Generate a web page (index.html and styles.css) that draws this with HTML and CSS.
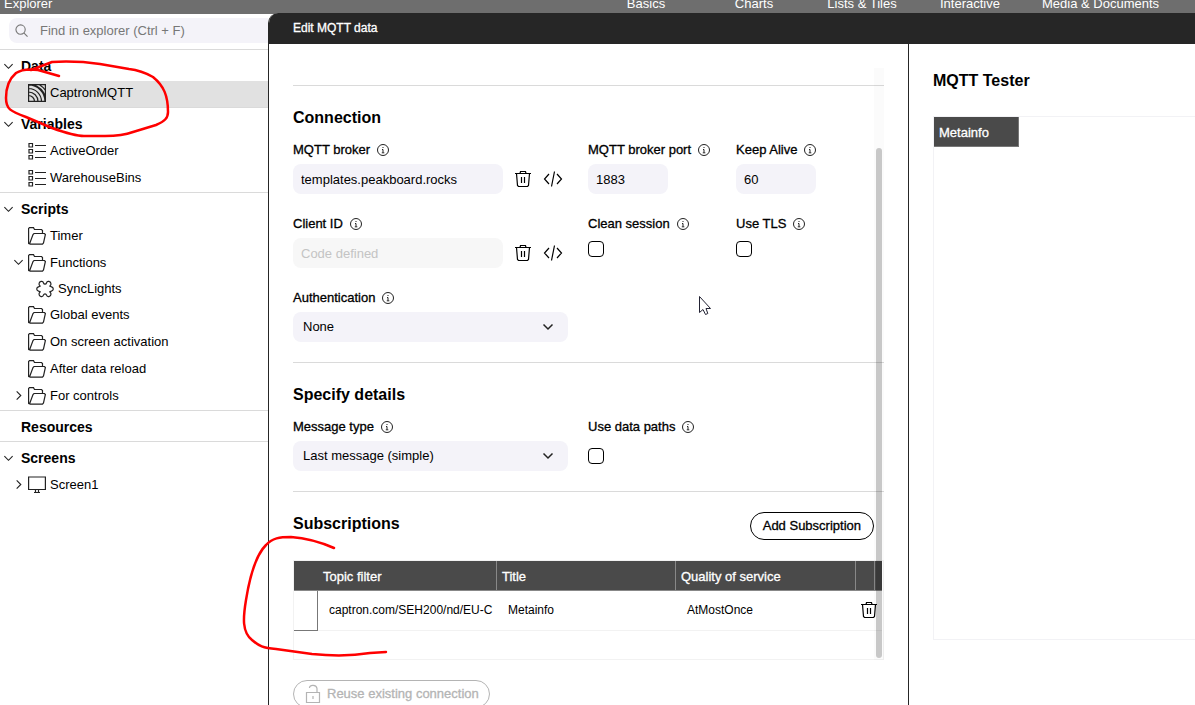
FILE: index.html
```html
<!DOCTYPE html>
<html lang="en">
<head>
<meta charset="utf-8">
<title>Edit MQTT data</title>
<link rel="stylesheet" href="styles.css">
</head>
<body>
<svg class="defs" aria-hidden="true">
  <symbol id="down" viewBox="0 0 12 12"><path d="M1.500 3.500 6 8l4.500-4.500"/></symbol>
  <symbol id="right" viewBox="0 0 12 12"><path d="M4 1.500 8.500 6 4 10.500"/></symbol>
  <symbol id="folder" viewBox="0 0 18 18"><path d="M1.500 17 .600 16.500V1.500L1.500 .600H5.500L6.500 2.500H13.500L14.500 3.500V6M1.500 17 5 7.500 6 6.500H16.500L17.400 7.500 15.500 16 14.500 17.200H1.500"/></symbol>
  <symbol id="list" viewBox="0 0 18 18"><path d="M1 1.500H4.500V5H1ZM1 7.500H4.500V11H1ZM1 13.500H4.500V17H1ZM7 3.500H18M7 9.500H18M7 15.500H18"/></symbol>
  <symbol id="feed" viewBox="0 0 18 18"><path d="M.600.600H17.400V17.400H.600ZM.500 11.500A6 6 0 0 1 6.500 17.500M.500 8A9.500 9.500 0 0 1 10 17.500M.500 4.500A13 13 0 0 1 13.500 17.500M.500 1A16.500 16.500 0 0 1 17 17.500M5 .500A20 20 0 0 1 17.500 12.500M11 .500A20 20 0 0 1 17.500 6.500"/></symbol>
  <symbol id="puzzle" viewBox="0 0 18 18"><path d="M7.500 3C8 4.500 10 4.500 10.500 3 11 .500 15 1 15 4 15 5 14.500 5.500 13.800 6.200 14.500 7 17.300 6.300 17.300 9 17.300 11.700 14.500 11 13.800 11.800 14.500 12.500 15 13 15 14 15 17 11 17.500 10.500 15 10 13.500 8 13.500 7.500 15 7 17.500 3 17 3 14 3 13 3.500 12.500 4.200 11.800 3.500 11 .700 11.700 .700 9 .700 6.300 3.500 7 4.200 6.200 3.500 5.500 3 5 3 4 3 1 7 .500 7.500 3Z"/></symbol>
  <symbol id="monitor" viewBox="0 0 18 18"><path d="M.600 1H17.400V13.500H.600ZM7.500 13.500V16M10.500 13.500V16M6 16.500H12"/></symbol>
  <symbol id="info" viewBox="0 0 12 12"><circle cx="6" cy="6" r="5.500"/><path d="M6 3V4M5 5.500H6V8.500M4.800 8.800H7.300"/></symbol>
  <symbol id="trash" viewBox="0 0 18 18"><path d="M1 3.500H17M6 3.500 6.500 1.500H11.500L12 3.500M2.500 3.500 3.500 15.500 4.500 16.500H13.500L14.500 15.500 15.500 3.500M7.500 7V13M10.500 7V13"/></symbol>
  <symbol id="code" viewBox="0 0 20 18"><path d="M6 4 1.500 9 6 14M14 4 18.500 9 14 14M11.500 1.500 8.500 16.500"/></symbol>
</svg>
<div class="app">
  <header class="topbar">
    <span class="topbar-title">Explorer</span>
    <nav class="tabs"><span>Basics</span><span>Charts</span><span>Lists &amp; Tiles</span><span>Interactive</span><span>Media &amp; Documents</span><span>Controls</span></nav>
  </header>
  <div class="work">
    <aside class="explorer">
      <div class="search">
        <svg class="search-icon" viewBox="0 0 14 14"><circle cx="6" cy="6" r="5"/><path d="m9.500 9.500 4 4"/></svg>
        <input type="search" aria-label="Find in explorer" placeholder="Find in explorer (Ctrl + F)">
      </div>
      <section class="group">
        <h3><svg class="chev"><use href="#down"/></svg>Data</h3>
        <div class="item selected"><span class="twist"></span><svg class="ico"><use href="#feed"/></svg>CaptronMQTT</div>
      </section>
      <section class="group">
        <h3><svg class="chev"><use href="#down"/></svg>Variables</h3>
        <div class="item"><span class="twist"></span><svg class="ico"><use href="#list"/></svg>ActiveOrder</div>
        <div class="item"><span class="twist"></span><svg class="ico"><use href="#list"/></svg>WarehouseBins</div>
      </section>
      <section class="group">
        <h3><svg class="chev"><use href="#down"/></svg>Scripts</h3>
        <div class="item"><span class="twist"></span><svg class="ico"><use href="#folder"/></svg>Timer</div>
        <div class="item"><svg class="twist"><use href="#down"/></svg><svg class="ico"><use href="#folder"/></svg>Functions</div>
        <div class="item nested"><span class="twist"></span><svg class="ico"><use href="#puzzle"/></svg>SyncLights</div>
        <div class="item"><span class="twist"></span><svg class="ico"><use href="#folder"/></svg>Global events</div>
        <div class="item"><span class="twist"></span><svg class="ico"><use href="#folder"/></svg>On screen activation</div>
        <div class="item"><span class="twist"></span><svg class="ico"><use href="#folder"/></svg>After data reload</div>
        <div class="item"><svg class="twist"><use href="#right"/></svg><svg class="ico"><use href="#folder"/></svg>For controls</div>
      </section>
      <section class="group">
        <h3><span class="chev"></span>Resources</h3>
      </section>
      <section class="group">
        <h3><svg class="chev"><use href="#down"/></svg>Screens</h3>
        <div class="item"><svg class="twist"><use href="#right"/></svg><svg class="ico"><use href="#monitor"/></svg>Screen1</div>
      </section>
    </aside>

    <main class="dialog">
      <h1>Edit MQTT data</h1>
      <div class="panes">
        <form class="settings">
          <section class="block">
            <h2>Connection</h2>
            <div class="fields">
              <div class="field">
                <label for="broker">MQTT broker <svg class="info"><use href="#info"/></svg></label>
                <div class="line">
                  <input id="broker" class="box wide" type="text" value="templates.peakboard.rocks">
                  <button type="button" class="tool" aria-label="Clear"><svg><use href="#trash"/></svg></button>
                  <button type="button" class="tool" aria-label="Code"><svg><use href="#code"/></svg></button>
                </div>
              </div>
              <div class="field">
                <label for="port">MQTT broker port <svg class="info"><use href="#info"/></svg></label>
                <input id="port" class="box short" type="text" value="1883">
              </div>
              <div class="field">
                <label for="alive">Keep Alive <svg class="info"><use href="#info"/></svg></label>
                <input id="alive" class="box short" type="text" value="60">
              </div>
              <div class="field">
                <label for="client">Client ID <svg class="info"><use href="#info"/></svg></label>
                <div class="line">
                  <input id="client" class="box wide" type="text" placeholder="Code defined" disabled>
                  <button type="button" class="tool" aria-label="Clear"><svg><use href="#trash"/></svg></button>
                  <button type="button" class="tool" aria-label="Code"><svg><use href="#code"/></svg></button>
                </div>
              </div>
              <div class="field">
                <label for="clean">Clean session <svg class="info"><use href="#info"/></svg></label>
                <input id="clean" class="check" type="checkbox">
              </div>
              <div class="field">
                <label for="tls">Use TLS <svg class="info"><use href="#info"/></svg></label>
                <input id="tls" class="check" type="checkbox">
              </div>
              <div class="field">
                <label for="auth">Authentication <svg class="info"><use href="#info"/></svg></label>
                <div class="select"><select id="auth" class="box"><option>None</option></select><svg><use href="#down"/></svg></div>
              </div>
            </div>
          </section>
          <section class="block">
            <h2>Specify details</h2>
            <div class="fields">
              <div class="field">
                <label for="type">Message type <svg class="info"><use href="#info"/></svg></label>
                <div class="select"><select id="type" class="box"><option>Last message (simple)</option></select><svg><use href="#down"/></svg></div>
              </div>
              <div class="field">
                <label for="paths">Use data paths <svg class="info"><use href="#info"/></svg></label>
                <input id="paths" class="check low" type="checkbox">
              </div>
            </div>
          </section>
          <section class="block">
            <div class="block-head">
              <h2>Subscriptions</h2>
              <button type="button" class="pill">Add Subscription</button>
            </div>
            <div class="table-frame">
              <table>
                <colgroup><col class="c-mark"><col class="c-topic"><col class="c-title"><col class="c-qos"><col class="c-del"><col></colgroup>
                <thead><tr><th class="plain"></th><th>Topic filter</th><th>Title</th><th>Quality of service</th><th></th><th class="plain"></th></tr></thead>
                <tbody><tr><td class="mark"></td><td><div class="clip">captron.com/SEH200/nd/EU-C</div></td><td>Metainfo</td><td>AtMostOnce</td><td colspan="2" class="del"><button type="button" class="tool" aria-label="Delete"><svg><use href="#trash"/></svg></button></td></tr></tbody>
              </table>
            </div>
            <div class="scrollbar"><div class="thumb"></div></div>
          </section>
          <button type="button" class="pill muted" disabled><svg viewBox="0 0 16 20"><path d="M1.500 8.500H14.500V18.500H1.500ZM4.500 4V3.500C5 .500 11.500.500 12 4.500V8.500M8 12V15"/></svg>Reuse existing connection</button>
        </form>
        <section class="tester">
          <h2>MQTT Tester</h2>
          <div class="tester-box"><span class="tester-tab">Metainfo</span></div>
        </section>
      </div>
    </main>
  </div>
  <svg class="ink" viewBox="0 0 400 705">
    <path d="M59 76 38 70C31 69 22 69 16 73 9 79 6 88 6 98 6 109 10 111 26 117L52 128C66 133 75 136 84 136H105C118 136 125 135 133 132L156 125C165 121 168 118 168 112 168 96 164 86 153 77 146 73 138 70 129 69L100 64C86 62 70 61 52 62L31 70"/>
    <path d="M334 548C318 541 305 538 291 537 280 537 272 538 266 545 256 555 250 575 246 600 243 618 242 632 252 640 259 646 263 648 276 649L312 654C332 656 352 656 370 653L386 652"/>
  </svg>
  <svg class="cursor" viewBox="0 0 12 20"><path d="M.500.500V16.500L4 13.500 6.500 18.500 8.800 17.500 7 12.500H11.500Z"/></svg>
</div>
</body>
</html>
```
FILE: styles.css
```css
* { box-sizing: border-box; }
body { margin: 0; font: 13px/20px "Liberation Sans", Arial, sans-serif; color: #000; background: #fff; }
h1, h2, h3 { margin: 0; }
button, input, select { font: inherit; color: inherit; margin: 0; }
svg { fill: none; stroke: #222; stroke-width: 1.2; flex: none; }
.defs { display: none; }
.app { position: relative; height: 100vh; overflow: hidden; display: flex; flex-direction: column; }

.topbar { flex: none; height: 14px; background: #6e6e6e; color: #fff; display: flex; align-items: flex-end; overflow: hidden; }
.topbar-title { width: 592px; padding-left: 4px; flex: none; }
.tabs { display: flex; white-space: nowrap; }
.tabs span { min-width: 108px; padding: 0 18px; text-align: center; flex: none; }

.work { flex: 1; min-height: 0; display: flex; }
.explorer { width: 268px; flex: none; }
.search { height: 35px; padding: 4px 0 6px 9px; position: relative; }
.search input { width: 100%; height: 25px; border: 0; border-radius: 8px 0 0 8px; background: #f4f3f9; padding: 0 0 0 31px; outline: 0; }
.search input::placeholder { color: #777; opacity: 1; }
.search-icon { position: absolute; left: 15px; top: 10px; width: 13px; height: 13px; stroke: #777; }
.group { border-top: 1px solid #dadada; }
.group h3 { display: flex; align-items: center; height: 30px; padding: 2px 0 0 3px; font-size: 14px; font-weight: 700; }
.chev { width: 11px; height: 11px; margin-right: 7px; }
.item { display: flex; align-items: center; height: 27px; padding: 0 0 2px 13px; }
.item.selected { height: 26px; margin-top: 1px; background: #e1e1e1; }
.item.nested { height: 25px; padding-left: 21px; }
.twist { width: 11px; height: 11px; margin-right: 4px; }
.ico { width: 18px; height: 18px; margin-right: 4px; }

.dialog { flex: 1; min-width: 0; display: flex; flex-direction: column; margin-top: -1px; background: #fff; border-left: 1px solid #262626; border-top-left-radius: 10px; overflow: hidden; }
.dialog h1 { flex: none; height: 31px; padding-left: 24px; background: #262626; color: #fff; font-size: 12px; font-weight: 400; line-height: 30px; }
.dialog h1, .field label, .pill, th, .tester-tab { -webkit-text-stroke: 0.3px currentColor; }
.panes { flex: 1; min-height: 0; display: flex; }
.settings { width: 640px; flex: none; padding: 41px 24px 0; border-right: 1px solid #262626; overflow: hidden; position: relative; }
h2 { font-size: 16px; line-height: 24px; font-weight: 700; }
.block { border-top: 1px solid #dadada; padding: 20px 0; }
.fields { display: grid; grid-template-columns: 275px 128px 128px; gap: 20px; margin-top: 10px; }
.field label { display: flex; align-items: center; gap: 7px; margin-bottom: 4px; white-space: nowrap; }
.info { width: 12px; height: 12px; stroke-width: 1; }
.line { display: flex; align-items: center; }
.box { display: block; width: 100%; height: 30px; padding: 0 8px; border: 0; border-radius: 8px; background: #f4f3f9; outline: 0; }
.box:disabled { background: #f7f7f7; }
.box::placeholder { color: #c4c4c4; opacity: 1; }
.wide { width: 210px; margin-right: 11px; }
.short { width: 80px; }
.tool { display: flex; padding: 0; border: 0; background: none; }
.tool svg { width: 18px; height: 18px; stroke: #000; }
.line .tool + .tool { margin-left: 11px; }
.line .tool + .tool svg { width: 20px; }
.select { position: relative; }
.select select { appearance: none; padding: 0 10px; }
.select svg { position: absolute; right: 14px; top: 9px; width: 12px; height: 12px; stroke-width: 1.5; }
.check { display: block; appearance: none; width: 16px; height: 16px; margin-top: 7px; border: 1px solid #000; border-radius: 4px; background: #fff; }
.check.low { margin-top: 11px; }
.block-head { display: flex; justify-content: space-between; align-items: flex-start; padding-right: 10px; }
.pill { display: flex; align-items: center; height: 28px; padding: 0 12px; border: 1px solid #000; border-radius: 14px; background: #fff; white-space: nowrap; }
.pill.muted { padding: 0 10px; border-color: #b4b4b4; color: #b4b4b4; }
.pill.muted svg { width: 16px; height: 20px; margin: 0 6px 0 1px; stroke: #b4b4b4; }
.table-frame { height: 100px; margin-top: 20px; border: 1px solid #f2f2f2; }
table { width: 588px; table-layout: fixed; border-collapse: separate; border-spacing: 0; }
.c-mark { width: 24px; }
.c-topic, .c-title { width: 179px; }
.c-qos { width: 180px; }
.c-del { width: 19px; }
th { height: 30px; padding: 2px 5px 0; background: #4a4a4a; color: #fff; font-weight: 400; text-align: left; border-right: 1px solid #888; border-bottom: 1px solid #888; }
th.plain { border-right: 0; }
td { height: 40px; padding: 0 0 2px 11px; font-size: 12px; border-bottom: 1px solid #f2f2f2; }
td.mark { border-right: 1px solid #777; border-bottom: 1px solid #777; }
td.del { padding: 0 0 2px 4px; }
.clip { width: 164px; overflow: hidden; white-space: nowrap; }
.scrollbar { position: absolute; top: 24px; bottom: 45px; right: 24px; width: 10px; padding: 80px 2px 2px; background: rgba(0, 0, 0, .015); }
.thumb { height: 100%; border-radius: 3px; background: rgba(0, 0, 0, .2); }

.tester { flex: 1; min-width: 0; display: flex; flex-direction: column; padding: 25px 0 65px 24px; }
.tester-box { flex: 1; margin-top: 23px; border: 1px solid #f2f2f5; border-right: 0; }
.tester-tab { display: block; width: 85px; height: 30px; padding: 0 5px; background: #4a4a4a; color: #fff; border-right: 1px solid #777; border-bottom: 1px solid #777; line-height: 32px; }

.ink { position: absolute; left: 0; top: 0; width: 400px; height: 705px; stroke: #f00; stroke-width: 2.5; stroke-linecap: round; stroke-linejoin: round; pointer-events: none; }
.cursor { position: absolute; left: 699px; top: 296px; width: 12px; height: 20px; fill: #fff; stroke: #223; stroke-width: 1; pointer-events: none; }
```
